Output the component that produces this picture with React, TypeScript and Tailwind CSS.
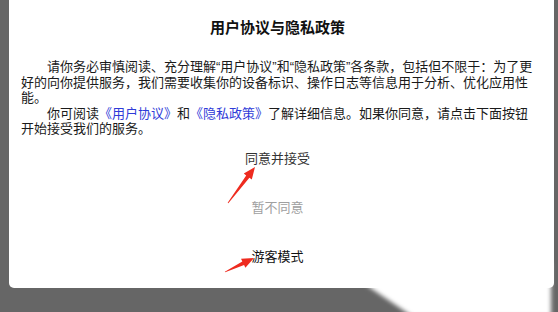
const FONT = { fontFamily: '"Liberation Sans", "Noto Sans CJK SC", sans-serif' };

function Arrow({ tail, head }: { tail: [number, number]; head: [number, number] }) {
  const [tx, ty] = tail;
  const [hx, hy] = head;
  const dx = hx - tx;
  const dy = hy - ty;
  const len = Math.hypot(dx, dy);
  const ux = dx / len;
  const uy = dy / len;
  const nx = -uy;
  const ny = ux;
  const headLen = 12;
  const bx = hx - ux * headLen;
  const by = hy - uy * headLen;
  const pts = [
    [tx - nx * 0.4, ty - ny * 0.4],
    [tx + nx * 0.4, ty + ny * 0.4],
    [bx + nx * 2, by + ny * 2],
    [bx + nx * 5, by + ny * 5],
    [hx, hy],
    [bx - nx * 5, by - ny * 5],
    [bx - nx * 2, by - ny * 2],
  ]
    .map((p) => p.join(","))
    .join(" ");
  return <polygon points={pts} fill="#ee2b1f" />;
}

export default function App() {
  return (
    <div
      className="relative w-[558px] h-[312px] bg-[#666666] overflow-hidden pl-[9px] pr-[4px]"
      style={FONT}
    >
      <div className="h-[288px] bg-white rounded-b-[5px] flex flex-col pl-3 pr-5">
        <h1 className="pt-[18px] h-9 text-center text-[15px] leading-5 font-bold text-[#111]">
          用户协议与隐私政策
        </h1>
        <div className="mt-[23px] text-[13px] leading-[15.5px] text-[#1a1a1a]">
          <p className="indent-[26px]">
            请你务必审慎阅读、充分理解“用户协议”和“隐私政策”各条款，包括但不限于：为了更好的向你提供服务，我们需要收集你的设备标识、操作日志等信息用于分析、优化应用性能。
          </p>
          <p className="indent-[26px]">
            你可阅读<span className="text-[#2f3bd8]">《用户协议》</span>和
            <span className="text-[#2f3bd8]">《隐私政策》</span>
            了解详细信息。如果你同意，请点击下面按钮开始接受我们的服务。
          </p>
        </div>
        <div className="-mt-0.5 flex flex-col text-[13px]">
          <button className="h-[49px] text-[#333]">同意并接受</button>
          <button className="h-[49px] text-[#a0a0a0]">暂不同意</button>
          <button className="h-[49px] text-[#111]">游客模式</button>
        </div>
      </div>

      <svg className="absolute inset-0 pointer-events-none" width="558" height="312">
        <defs>
          <filter id="soft" x="-10%" y="-10%" width="120%" height="130%">
            <feGaussianBlur stdDeviation="2.2" />
          </filter>
        </defs>
        <polygon
          points="366,285 551,262 551,316 412,316"
          fill="#ffffff"
          filter="url(#soft)"
        />
        <Arrow tail={[228, 203]} head={[255, 167]} />
        <Arrow tail={[225, 272]} head={[254, 258]} />
      </svg>
    </div>
  );
}
